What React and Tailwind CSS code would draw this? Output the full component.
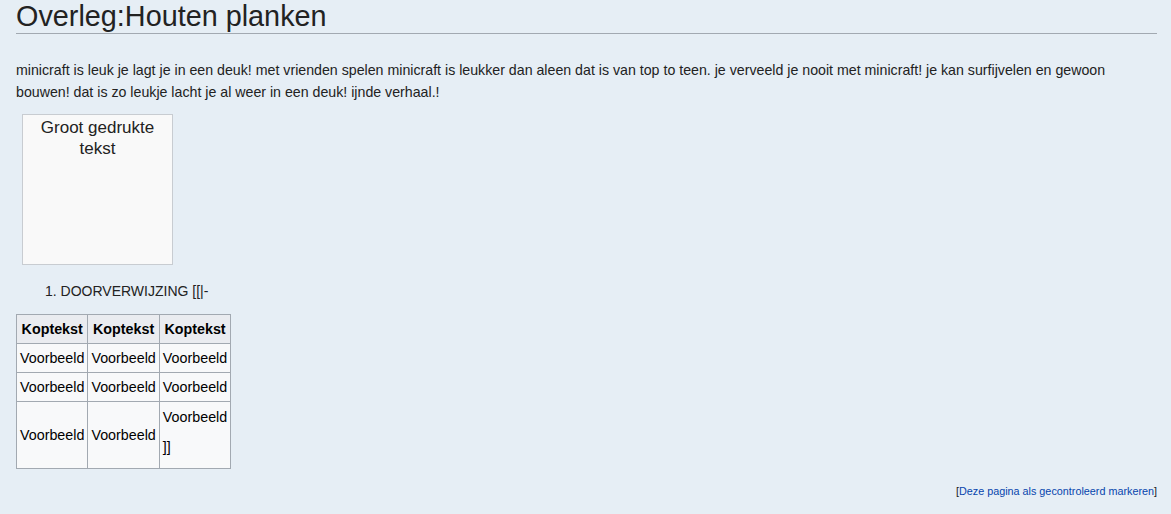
export default function App() {
  const cell = "border border-[#a2a9b1] px-[3px] py-[3px] align-middle";
  return (
    <div className="min-h-[514px] w-[1171px] bg-[#e6eef5] text-[#222222] font-['Liberation_Sans',Arial,sans-serif]">
      <div className="pl-[16px] pr-[14px] pt-0">
        <h1 className="text-[28.8px] leading-[33px] pt-0 border-b border-[#a2a9b1] font-normal">
          Overleg:Houten planken
        </h1>
        <p className="mt-[25px] text-[14.2px] leading-[22px]">
          minicraft is leuk je lagt je in een deuk! met vrienden spelen minicraft is leukker dan aleen dat is van top to teen. je verveeld je nooit met minicraft! je kan surfijvelen en gewoon bouwen! dat is zo leukje lacht je al weer in een deuk! ijnde verhaal.!
        </p>
        <div className="ml-[6px] mt-[11px] w-[151px] h-[151px] border border-[#c8ccd1] bg-[#f9f9f9] text-center text-[17px] leading-[21px] pt-[2px]">
          Groot gedrukte
          <br />
          tekst
        </div>
        <ol className="mt-[15px] ml-[29px] text-[14px] leading-[22px]">
          <li>1. DOORVERWIJZING [[|-</li>
        </ol>
        <table className="mt-[12px] border-collapse border border-[#a2a9b1] bg-[#f8f9fa] text-[14.3px] leading-[22px] text-black">
          <tbody>
            <tr className="bg-[#eaecf0]">
              <th className={cell + " font-bold text-center"}>Koptekst</th>
              <th className={cell + " font-bold text-center"}>Koptekst</th>
              <th className={cell + " font-bold text-center"}>Koptekst</th>
            </tr>
            <tr>
              <td className={cell}>Voorbeeld</td>
              <td className={cell}>Voorbeeld</td>
              <td className={cell}>Voorbeeld</td>
            </tr>
            <tr>
              <td className={cell}>Voorbeeld</td>
              <td className={cell}>Voorbeeld</td>
              <td className={cell}>Voorbeeld</td>
            </tr>
            <tr>
              <td className={cell}>Voorbeeld</td>
              <td className={cell}>Voorbeeld</td>
              <td className="border border-[#a2a9b1] px-[3px] pt-[4px] pb-[10px] align-top">
                <div className="flex flex-col gap-[8px]">
                  <span>Voorbeeld</span>
                  <span>]]</span>
                </div>
              </td>
            </tr>
          </tbody>
        </table>
        <div className="mt-[15px] flex justify-end text-[10.8px] leading-[14px]">
          <span className="text-[#222]">
            [<a className="text-[#0645ad]">Deze pagina als gecontroleerd markeren</a>]
          </span>
        </div>
      </div>
    </div>
  );
}
